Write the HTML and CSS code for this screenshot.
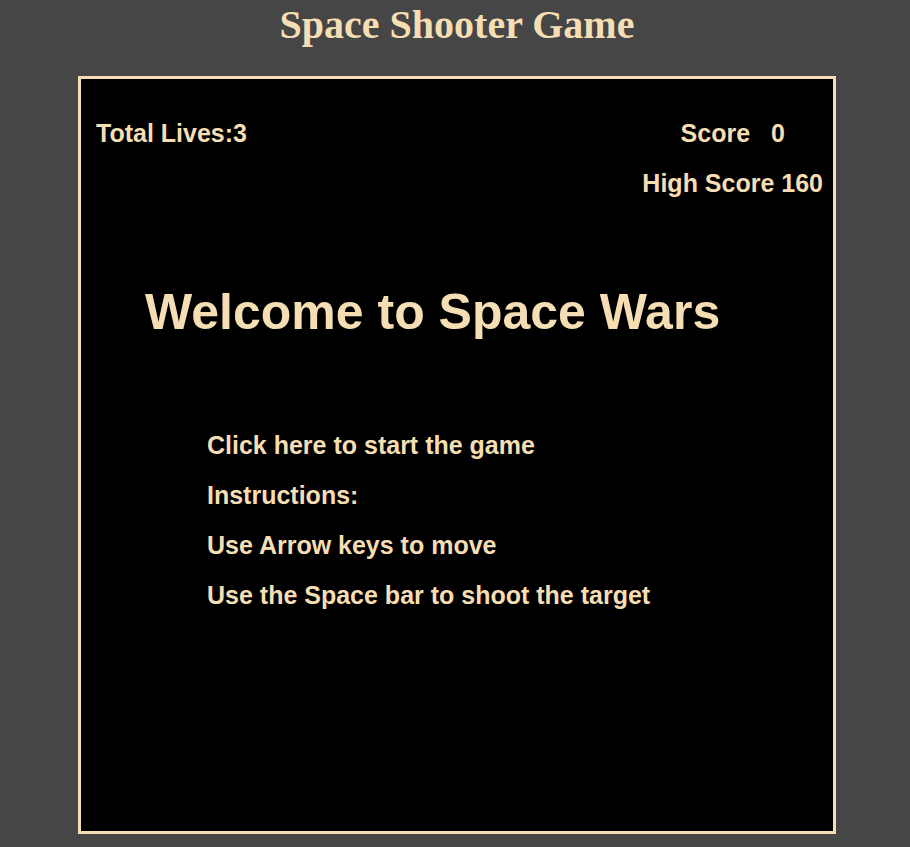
FILE: index.html
```html
<!DOCTYPE html>
<html>
<head>
<meta charset="utf-8">
<title>Space Shooter Game</title>
<link rel="stylesheet" href="styles.css">
</head>
<body>
  <h1 class="title">Space Shooter Game</h1>
  <div class="game">
    <div class="hud">
      <div class="lives">Total Lives:3</div>
      <div class="scores">
        <div class="score">Score&nbsp;&nbsp;&nbsp;0</div>
        <div class="high">High Score 160</div>
      </div>
    </div>
    <div class="welcome">Welcome to Space Wars</div>
    <div class="menu">
      <div class="item">Click here to start the game</div>
      <div class="item">Instructions:</div>
      <div class="item">Use Arrow keys to move</div>
      <div class="item">Use the Space bar to shoot the target</div>
    </div>
  </div>
</body>
</html>
```
FILE: styles.css
```css
html, body {
  background: #464646;
}
body {
  margin: 0 0 0 4px;
  color: #f5deb3;
  font-family: "Liberation Sans", Arial, sans-serif;
}
.title {
  margin: 3px 0 0;
  font-family: "Liberation Serif", "Times New Roman", serif;
  font-weight: bold;
  font-size: 40px;
  line-height: 44px;
  text-align: center;
}
.game {
  width: 752px;
  height: 752px;
  margin: 29px auto 0;
  border: 3px solid #f5deb3;
  background: #000;
  box-sizing: content-box;
  font-weight: bold;
}
.hud {
  display: flex;
  justify-content: space-between;
  padding: 29px 10px 0 15px;
  font-size: 25px;
  line-height: 50px;
}
.scores {
  text-align: center;
}
.welcome {
  margin: 74px 0 0 64px;
  font-size: 50px;
  line-height: 60px;
}
.menu {
  margin: 78px 0 0 126px;
  font-size: 25px;
  line-height: 50px;
}
```
